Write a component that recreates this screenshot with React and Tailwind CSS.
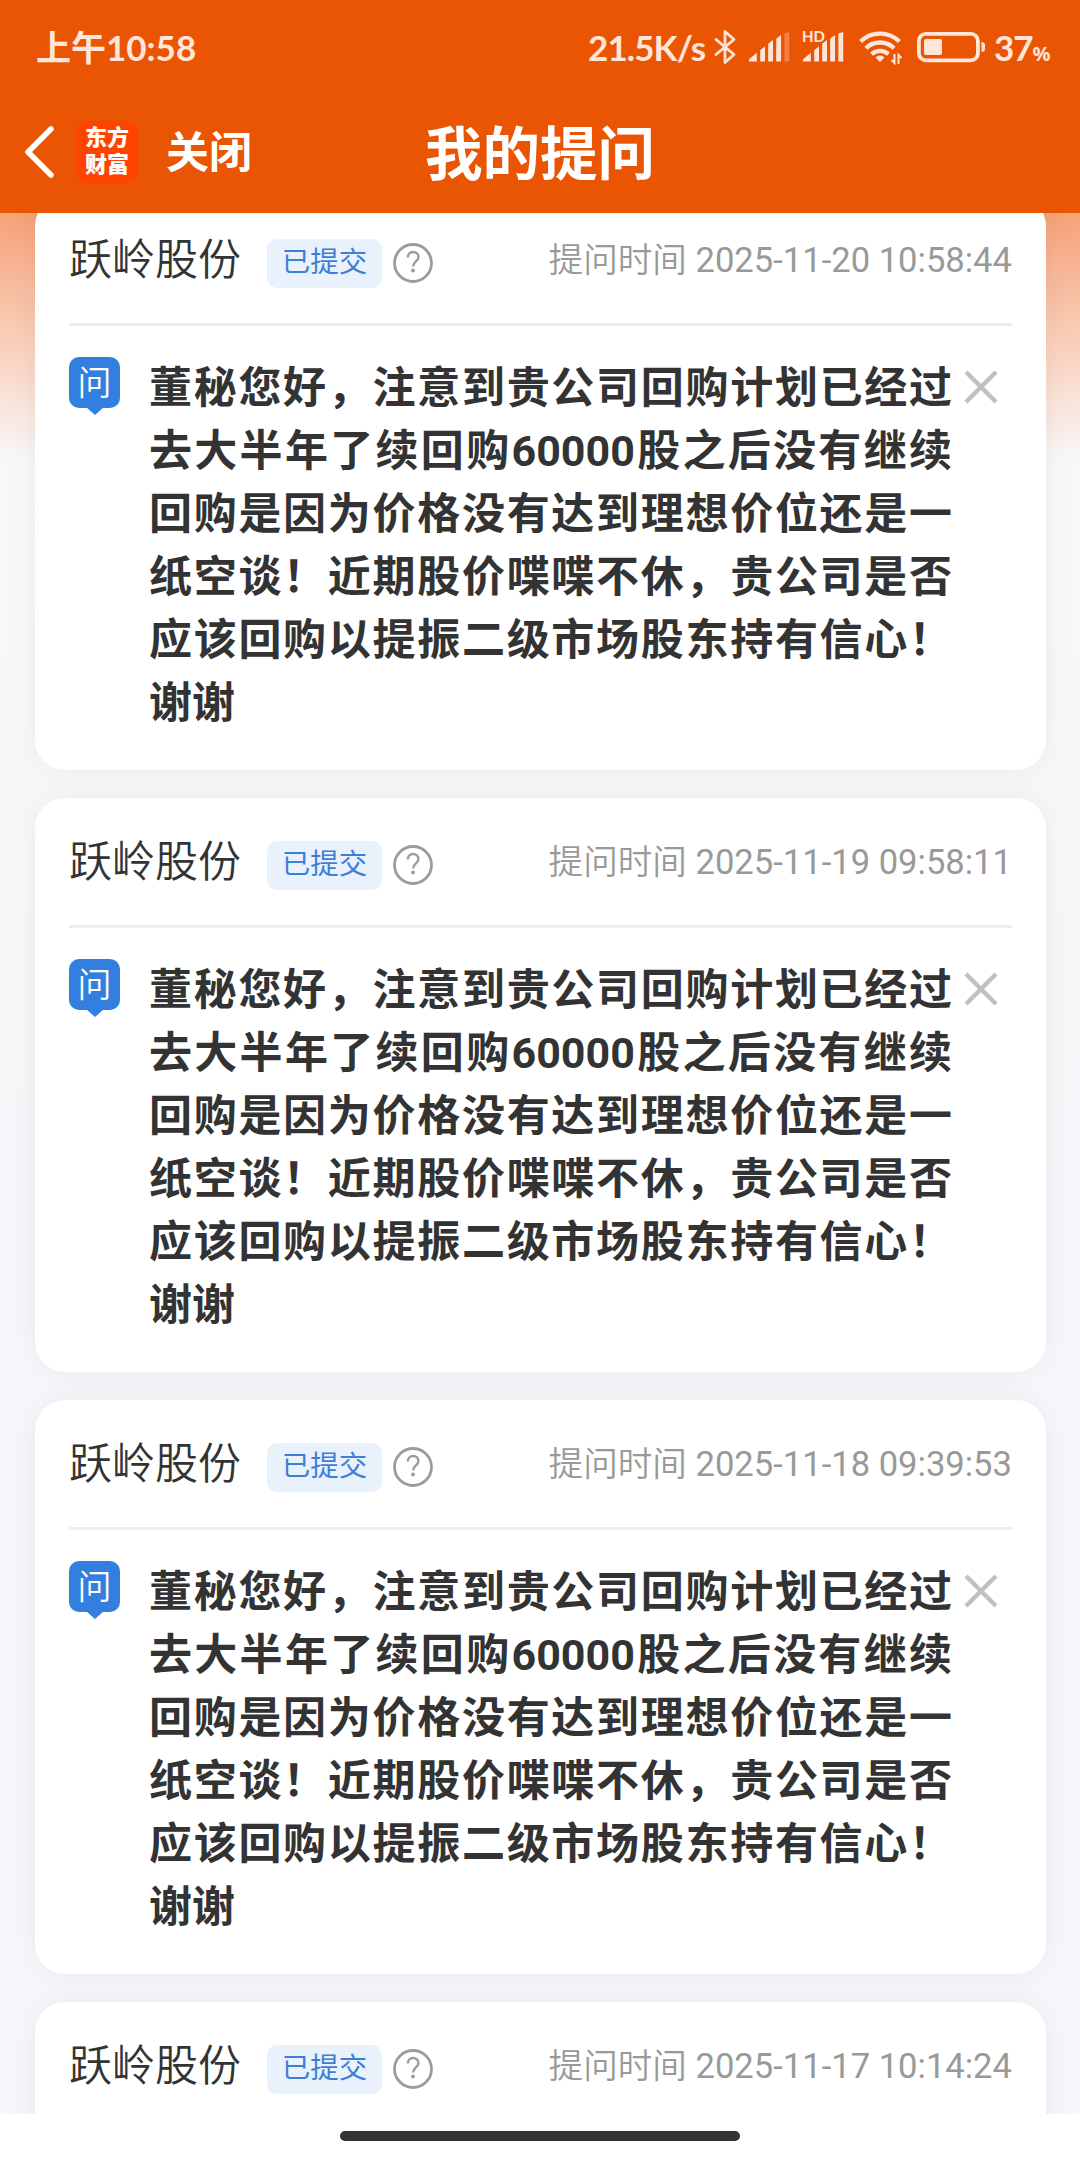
const content =
  '董秘您好，注意到贵公司回购计划已经过去大半年了续回购60000股之后没有继续回购是因为价格没有达到理想价位还是一纸空谈！近期股价喋喋不休，贵公司是否应该回购以提振二级市场股东持有信心！谢谢'

const questions = [
  { id: 1, time: '2025-11-20 10:58:44', content },
  { id: 2, time: '2025-11-19 09:58:11', content },
  { id: 3, time: '2025-11-18 09:39:53', content },
  { id: 4, time: '2025-11-17 10:14:24' },
]

function Bluetooth() {
  return (
    <svg width="22" height="36" viewBox="0 0 22 36" fill="none" stroke="currentColor" strokeWidth="2.8" strokeLinejoin="round" strokeLinecap="round">
      <path d="M2 10.5 20 25.5 11 33.5V2.5L20 10.5 2 25.5" />
    </svg>
  )
}

function Signal({ weak }) {
  return (
    <svg width="41" height="30" viewBox="0 0 41 30" fill="currentColor">
      <path d="M0 29.5v-2.2l7.8-6.5v8.7z" />
      <path d="M11.2 18.3l4.8-3.8v15h-4.8z" />
      <path d="M19.2 11.8l4.8-3.8v21.5h-4.8z" />
      <path d="M27.2 6.8l4.8-3.8v26.5h-4.8z" />
      <path d="M35.4 1.5l4.8-1.5v29.5h-4.8z" opacity={weak ? 0.3 : 1} />
    </svg>
  )
}

function Wifi() {
  return (
    <svg width="43" height="35" viewBox="0 0 43 35" fill="none" stroke="currentColor" strokeWidth="4.4">
      <path d="M1.5 11.5a28 28 0 0 1 39 0" />
      <path d="M7 18.2a20 20 0 0 1 28 0" />
      <path d="M12.5 24.2a12.5 12.5 0 0 1 17 0" />
      <path d="M21 32l-4.5-4.5a6 6 0 0 1 9 0z" fill="currentColor" stroke="none" />
      <path d="M35.5 24v9l-3-3M39.5 34v-9l3 3" strokeWidth="2" />
    </svg>
  )
}

function Battery() {
  return (
    <svg width="69" height="32" viewBox="0 0 69 32" fill="none">
      <rect x="1.9" y="2.8" width="59" height="26.5" rx="7" stroke="currentColor" strokeWidth="3.8" />
      <rect x="7" y="8" width="18" height="16" rx="2" fill="currentColor" />
      <path d="M64.5 11c2 0 3.5 1 3.5 3v4c0 2-1.5 3-3.5 3z" fill="currentColor" />
    </svg>
  )
}

function StatusBar() {
  return (
    <div className="flex h-[94px] items-center pl-9 text-[35px] leading-none font-bold text-[#ffe6d9]">
      <span className="w-[552px] whitespace-nowrap">上午10:58</span>
      <span className="w-[126px] tracking-[-0.9px] whitespace-nowrap">21.5K/s</span>
      <Bluetooth />
      <span className="ml-[13px]"><Signal weak /></span>
      <span className="relative ml-[13px]">
        <Signal />
        <span className="absolute -top-[3px] -left-px text-[15px] leading-none">HD</span>
      </span>
      <span className="ml-[15px]"><Wifi /></span>
      <span className="ml-[15px]"><Battery /></span>
      <span className="ml-[8px] tracking-[-1px] whitespace-nowrap">
        37<span className="font-['Noto_Sans'] text-[20px] font-bold">%</span>
      </span>
    </div>
  )
}

function NavBar() {
  return (
    <div className="grid h-[115px] grid-cols-3 items-center text-white">
      <div className="flex items-center pl-[23px]">
        <svg width="32" height="52" viewBox="0 0 32 52" fill="none" stroke="currentColor" strokeWidth="5.5" strokeLinecap="round" strokeLinejoin="round">
          <path d="M28 3 5 26l23 23" />
        </svg>
        <div className="ml-[21px] flex h-[62px] w-[62px] flex-col items-center rounded-[12px] bg-[#ff4300] pt-[2px] text-[22px] leading-[27px] font-black">
          <span>东方</span>
          <span>财富</span>
        </div>
        <span className="ml-[28px] text-[43px] leading-none font-bold">关闭</span>
      </div>
      <h1 className="pt-[2px] text-center text-[57.5px] leading-none font-bold">我的提问</h1>
    </div>
  )
}

function HelpIcon() {
  return (
    <svg className="mt-[7px] ml-[10px]" width="42" height="42" viewBox="0 0 42 42" fill="none" stroke="#9c9c9c">
      <circle cx="21" cy="21" r="18.5" strokeWidth="2.8" />
      <path d="M15.8 15.5c0-3.4 2.2-5.5 5.3-5.5s5.3 2 5.3 5c0 4.3-5.3 4.6-5.3 9.5" strokeWidth="2.4" />
      <circle cx="21" cy="28.5" r="1.9" fill="#9c9c9c" stroke="none" />
    </svg>
  )
}

function QuestionCard({ time, content }) {
  return (
    <div className="h-[574px] shrink-0 rounded-[30px] bg-white px-[34px] shadow-[0_0_30px_rgba(0,0,0,0.06)]">
      <div className="flex h-[130px] items-center border-b-3 border-[#ededed]">
        <span className="mt-[2px] text-[43px] leading-none font-[350] text-[#333]">跃岭股份</span>
        <span className="mt-[7px] ml-[26px] flex h-[49px] w-[115px] items-center justify-center rounded-[10px] bg-[#e9f2fc] text-[28.5px] leading-none text-[#3d7fd6]">
          已提交
        </span>
        <HelpIcon />
        <span className="mt-[2px] ml-auto text-[34.6px] leading-none whitespace-nowrap text-[#999]">
          <span className="font-[350]">提问时间</span> {time}
        </span>
      </div>
      {content && (
        <div className="flex pt-[31px]">
          <div className="relative flex h-[51px] w-[51px] shrink-0 items-center justify-center rounded-[10px] bg-[#337fe0] text-[34px] leading-none font-[350] text-white">
            问
            <svg className="absolute top-[50px] left-[17px]" width="18" height="8" viewBox="0 0 18 8" fill="#337fe0">
              <path d="M0 0h18L9 8z" />
            </svg>
          </div>
          <p className="ml-[29px] w-[803px] shrink-0 text-justify text-[43px] leading-[63px] font-bold text-[#333]">{content}</p>
          <svg className="mt-[13px] ml-[12px] shrink-0" width="34" height="34" viewBox="0 0 34 34" stroke="#c0c0c0" strokeWidth="4.4">
            <path d="M2 2l30 30M32 2 2 32" />
          </svg>
        </div>
      )}
    </div>
  )
}

function App() {
  return (
    <div className="flex h-[2158px] w-[1080px] flex-col overflow-hidden bg-white font-[Roboto,'Noto_Sans_CJK_SC',sans-serif]">
      <header className="z-10 h-[213px] shrink-0 bg-[#ea5504] font-[Lato,'Noto_Sans_CJK_SC',sans-serif]">
        <StatusBar />
        <NavBar />
      </header>
      <main className="h-[1901px] overflow-hidden bg-linear-to-b from-[#f5a277] from-0% via-[#f8f8f8] via-[13%] to-[#f5f7fa] to-50% pr-[34px] pl-[35px]">
        <div className="-mt-[17px] flex flex-col gap-7">
          {questions.map((q) => (
            <QuestionCard key={q.id} time={q.time} content={q.content} />
          ))}
        </div>
      </main>
      <footer className="flex h-[44px] shrink-0 justify-center bg-white pt-[17px]">
        <div className="h-[10px] w-[400px] rounded-full bg-[#333]" />
      </footer>
    </div>
  )
}

export default App
